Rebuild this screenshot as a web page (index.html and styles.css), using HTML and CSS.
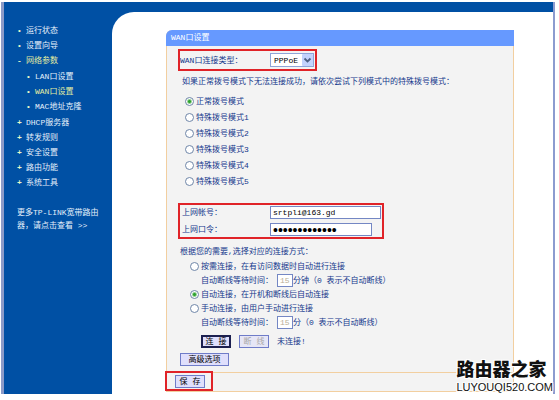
FILE: index.html
```html
<!DOCTYPE html>
<html lang="zh-CN">
<head>
    <meta charset="UTF-8">
    <meta name="viewport" content="width=device-width, initial-scale=1.0">
    <title>WAN口设置</title>
    <link rel="stylesheet" href="styles.css">
</head>
<body>
    <div class="shell">
        <nav class="sidebar">
            <ul class="menu">
                <li><a href="#">运行状态</a></li>
                <li><a href="#">设置向导</a></li>
                <li class="open"><a href="#">网络参数</a>
                    <ul class="submenu">
                        <li><a href="#">LAN口设置</a></li>
                        <li><a class="current" href="#">WAN口设置</a></li>
                        <li><a href="#">MAC地址克隆</a></li>
                    </ul>
                </li>
                <li class="closed"><a href="#">DHCP服务器</a></li>
                <li class="closed"><a href="#">转发规则</a></li>
                <li class="closed"><a href="#">安全设置</a></li>
                <li class="closed"><a href="#">路由功能</a></li>
                <li class="closed"><a href="#">系统工具</a></li>
            </ul>
            <a class="more" href="#">更多TP-LINK宽带路由<br>器，请点击查看 &gt;&gt;</a>
        </nav>
        <main class="content">
            <form class="panel">
                <h1>WAN口设置</h1>
                <div class="panel-body">
                    <div class="mark mark-type">
                        <label for="wanType">WAN口连接类型：</label>
                        <span class="select-box">
                            <select id="wanType">
                                <option>PPPoE</option>
                            </select>
                            <svg class="arrow" viewBox="0 0 11 12" aria-hidden="true">
                                <rect width="11" height="12" rx="1" fill="#c3d3fd"/>
                                <path d="M2.5 4.5l3 3 3-3" fill="none" stroke="#4d6185" stroke-width="1.8"/>
                            </svg>
                        </span>
                    </div>
                    <p class="tip">如果正常拨号模式下无法连接成功，请依次尝试下列模式中的特殊拨号模式：</p>
                    <div class="modes">
                        <label><input type="radio" name="dial" checked>正常拨号模式</label>
                        <label><input type="radio" name="dial">特殊拨号模式1</label>
                        <label><input type="radio" name="dial">特殊拨号模式2</label>
                        <label><input type="radio" name="dial">特殊拨号模式3</label>
                        <label><input type="radio" name="dial">特殊拨号模式4</label>
                        <label><input type="radio" name="dial">特殊拨号模式5</label>
                    </div>
                    <div class="mark mark-account">
                        <label for="account">上网帐号：</label>
                        <input class="text account" type="text" id="account" value="srtpli@163.gd">
                        <label for="password">上网口令：</label>
                        <input class="text password" type="password" id="password" value="1234567890123">
                    </div>
                    <p class="need">根据您的需要,选择对应的连接方式：</p>
                    <div class="connect">
                        <label><input type="radio" name="link">按需连接，在有访问数据时自动进行连接</label>
                        <div class="wait">
                            <label for="wait1">自动断线等待时间：</label>
                            <input class="text minutes" type="text" id="wait1" value="15" disabled>
                            <span>分钟（0 表示不自动断线）</span>
                        </div>
                        <label><input type="radio" name="link" checked>自动连接，在开机和断线后自动连接</label>
                        <label><input type="radio" name="link">手动连接，由用户手动进行连接</label>
                        <div class="wait">
                            <label for="wait2">自动断线等待时间：</label>
                            <input class="text minutes" type="text" id="wait2" value="15" disabled>
                            <span>分（0 表示不自动断线）</span>
                        </div>
                    </div>
                    <div class="actions">
                        <button class="primary" type="button">连 接</button>
                        <button type="button" disabled>断 线</button>
                        <span>未连接!</span>
                    </div>
                    <button class="advanced" type="button">高级选项</button>
                </div>
                <div class="panel-foot">
                    <div class="mark mark-save">
                        <button type="submit">保 存</button>
                    </div>
                </div>
            </form>
        </main>
    </div>
    <div class="watermark">
        <strong>路由器之家</strong>
        <span>LUYOUQI520.COM</span>
    </div>
</body>
</html>
```
FILE: styles.css
```css
* {
    box-sizing: border-box;
}
body {
    margin: 0;
    padding: 2px 4px 0 1px;
    background: white;
    font-family: "Liberation Mono", "Noto Sans CJK SC", monospace;
    font-size: 8px;
    line-height: 15px;
    color: #14388c;
}
h1, p, ul {
    margin: 0;
    padding: 0;
    font-size: 8px;
    font-weight: normal;
}
.shell {
    display: flex;
    background: #0050a4;
    border-left: 3px solid #8c9bc8;
    border-right: 2px solid #8c9bcf;
    padding-top: 10px;
}

/* left menu */
.sidebar {
    flex: none;
    width: 108px;
    padding: 11px 0 0 13px;
}
.sidebar a {
    color: #e4effa;
    text-decoration: none;
}
.menu, .submenu {
    list-style: none;
}
.menu li::before {
    content: "•";
    display: inline-block;
    width: 9px;
    color: #e8f8c8;
}
.menu .open::before {
    content: "-";
    font-weight: bold;
}
.menu .closed::before {
    content: "+";
    font-weight: bold;
}
.submenu {
    padding: 1px 0 1px 9px;
}
.menu .open > a, .menu .current {
    color: #e3eca0;
}
.more {
    display: block;
    margin-top: 16px;
    line-height: 13px;
    white-space: nowrap;
}

/* right side */
.content {
    flex: 1;
    min-width: 0;
    background: white;
    border-top-left-radius: 22px;
    padding: 18px 39px 2px 54px;
}
.panel {
    background: #f3f3f3;
    border: 1px solid #f2cfa0;
    border-top: none;
    border-top-left-radius: 6px;
}
.panel h1 {
    margin: 0 -1px;
    padding-left: 5px;
    background: #6699ff;
    color: white;
    line-height: 16px;
    border-top-left-radius: 6px;
}
.panel-body {
    padding: 3px 10px 6px 11px;
}
.mark {
    border: 2px solid #e02328;
}
.mark-type {
    display: flex;
    align-items: center;
    width: 139px;
    height: 22px;
}
.mark-type label {
    width: 90px;
    white-space: nowrap;
}
.select-box {
    position: relative;
    width: 44px;
}
select {
    display: block;
    appearance: none;
    width: 44px;
    height: 14px;
    margin: 0;
    padding: 0 0 0 3px;
    border: 1px solid #8fa5d8;
    border-radius: 0;
    background: white;
    color: black;
    font-family: inherit;
    font-size: 8px;
}
.arrow {
    position: absolute;
    top: 1px;
    right: 1px;
    width: 11px;
    height: 12px;
    pointer-events: none;
}
.tip {
    padding: 3px 0 4px 4px;
}
.modes {
    padding-left: 7px;
}
.modes label, .connect > label {
    display: flex;
    align-items: center;
    gap: 2px;
    height: 16px;
}
input[type="radio"] {
    appearance: none;
    width: 9px;
    height: 9px;
    margin: 0;
    border: 1px solid #6f86a8;
    border-radius: 50%;
    background: white;
}
input[type="radio"]:checked {
    background: radial-gradient(circle, #2fa32f 0 1px, white 3px);
}
.mark-account {
    display: grid;
    grid-template-columns: 88px 1fr;
    row-gap: 4px;
    align-items: center;
    width: 206px;
    margin-top: 14px;
    padding: 1px 0 1px 2px;
}
.mark-account label {
    line-height: 13px;
}
.text {
    height: 13px;
    margin: 0;
    padding: 0 2px;
    border: 1px solid #7487c4;
    background: white;
    color: black;
    font-family: inherit;
    font-size: 8px;
}
.account {
    width: 111px;
}
.password {
    width: 102px;
    font-family: "Liberation Sans", sans-serif;
    font-size: 14px;
}
.need {
    padding: 5px 0 0 2px;
}
.connect {
    padding-left: 12px;
}
.connect > label {
    height: 14px;
}
.wait {
    display: flex;
    align-items: center;
    height: 14px;
    padding-left: 11px;
    white-space: nowrap;
}
.wait .minutes {
    width: 16px;
    margin-left: 4px;
    color: #b8ae94;
}
.actions {
    display: flex;
    align-items: center;
    gap: 8px;
    margin-top: 5px;
    padding-left: 23px;
}
button {
    height: 13px;
    width: 30px;
    margin: 0;
    padding: 0;
    border: 1px solid #6f7cc8;
    background: #dfdffc;
    color: black;
    font-family: inherit;
    font-size: 8px;
    line-height: 11px;
    white-space: nowrap;
}
button:disabled {
    color: #aaa8a8;
    background: #e6e6f6;
}
.primary {
    border: 2px solid #1c2050;
    line-height: 9px;
}
.advanced {
    display: block;
    width: 49px;
    margin: 4px 0 0 2px;
}
.panel-foot {
    border-top: 1px solid #f2cfa0;
    height: 19px;
}
.mark-save {
    width: 48px;
    height: 20px;
    margin: -2px 0 0 -2px;
    padding: 2px 0 0 8px;
    line-height: 13px;
}
.mark-save button {
    display: block;
}

.watermark {
    position: absolute;
    top: 355px;
    right: 6px;
    color: #111;
    text-shadow: 1px 1px white, -1px -1px white, 1px -1px white, -1px 1px white;
}
.watermark strong, .watermark span {
    display: block;
}
.watermark strong {
    font-family: "Noto Sans CJK SC", sans-serif;
    font-size: 18px;
    font-weight: 900;
    line-height: 26px;
}
.watermark span {
    font-family: "Liberation Sans", sans-serif;
    font-size: 11px;
    line-height: 13px;
}
```
